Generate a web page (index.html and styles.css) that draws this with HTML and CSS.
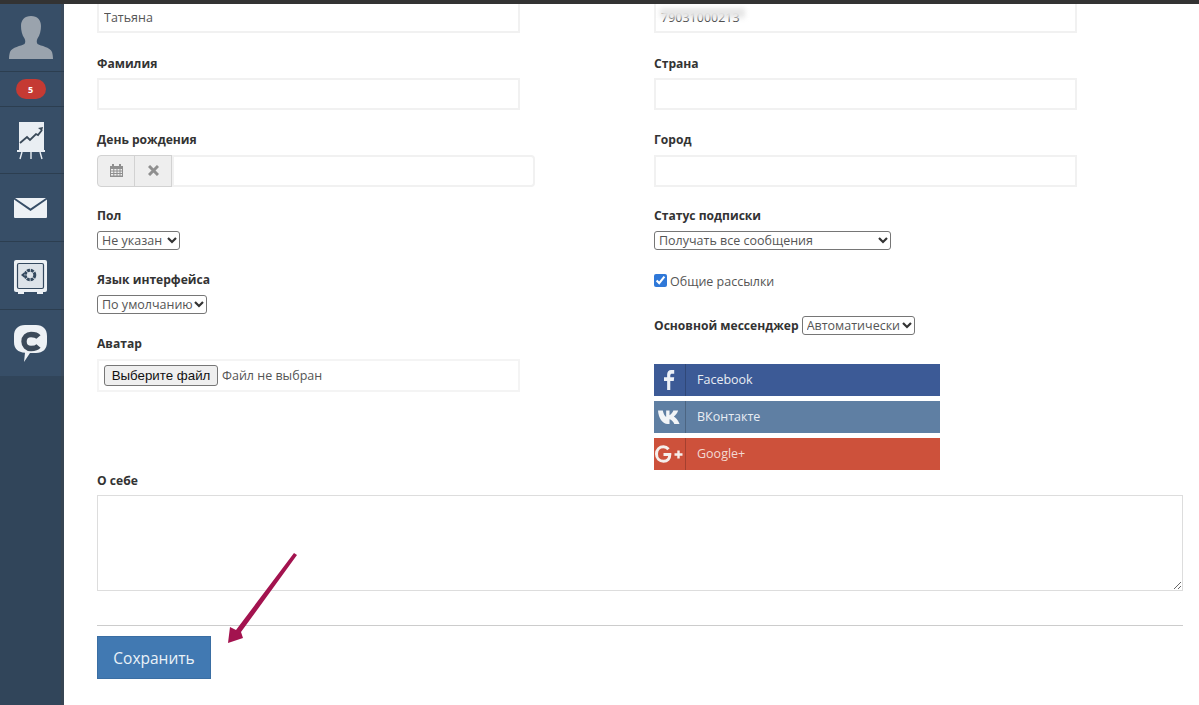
FILE: index.html
```html
<!DOCTYPE html>
<html lang="ru">
<head>
<meta charset="utf-8">
<title>Профиль</title>
<link rel="stylesheet" href="styles.css">
</head>
<body>
<div class="topbar"></div>
<div class="layout">
  <nav class="sidebar">
    <a class="nav-item nav-avatar">
      <svg width="44" height="43" viewBox="0 0 44 43"><path fill="#9aa3ad" d="M22 0c-6.500 0-10 4-10 10 0 4 1 9 3.500 12.500 1 2 1 4 0 5.500C12 30 3 31 1 36c-.7 2-1 5-1 7h44c0-2-.3-5-1-7-2-5-11-6-14.500-8-1-1.500-1-3.500 0-5.500C31 19 32 14 32 10c0-6-3.500-10-10-10z"/></svg>
    </a>
    <a class="nav-item nav-badge"><span class="badge">5</span></a>
    <a class="nav-item nav-chart">
      <svg width="28" height="38" viewBox="0 0 28 38"><rect x="2" y="0" width="25" height="28" fill="#e9eef3"/><path fill="none" stroke="#3a4a59" stroke-width="1.8" d="M3 21l7-6 3 3 6-6 2 1 4-5"/><path fill="#3a4a59" d="M26 5l-5 1 4 3z"/><rect x="0" y="28" width="28" height="2" fill="#e9eef3"/><path stroke="#e9eef3" stroke-width="1.4" d="M5 30l-2 7M14 30v7M23 30l2 7"/></svg>
    </a>
    <a class="nav-item nav-mail">
      <svg width="33" height="20" viewBox="0 0 33 20"><path fill="#edf1f5" d="M1 0h31L16.500 10.500zM0 1.500l16.500 11.500L33 1.500V19a1 1 0 0 1-1 1H1a1 1 0 0 1-1-1z"/></svg>
    </a>
    <a class="nav-item nav-safe">
      <svg width="33" height="34" viewBox="0 0 33 34"><rect width="33" height="32" rx="2" fill="#edf1f5"/><rect x="3.500" y="3.500" width="26" height="25" rx="1.500" fill="#dde3e9" stroke="#34495f" stroke-width="1.200"/><circle cx="16" cy="15" r="4.800" fill="none" stroke="#34495f" stroke-width="3" stroke-dasharray="3 .8"/><path fill="#34495f" d="M7 15l3-2.500v5z"/><rect x="4" y="32" width="6" height="2" fill="#edf1f5"/><rect x="23" y="32" width="6" height="2" fill="#edf1f5"/></svg>
    </a>
    <a class="nav-item nav-chat">
      <svg width="33" height="37" viewBox="0 0 33 37"><path fill="#edf1f5" d="M11 0h11c7 0 11 4 11 11v6c0 7-4 11-11 11h-6l-6 9 1-9.200C4 27 0 24 0 17v-6C0 4 4 0 11 0z"/><path fill="none" stroke="#3c4a5a" stroke-width="5.400" d="M24.500 12C23 10.200 20.500 9.500 17 9.500c-4 0-7 3-7 7s3 7 7 7c3.500 0 6-.7 7.500-2.500"/></svg>
    </a>
  </nav>
  <main class="content">
    <form class="profile-form">
      <div class="columns">
        <div class="col">
          <div class="field field-first">
            <input class="text-input" type="text" value="Татьяна">
          </div>
          <div class="field">
            <label class="label">Фамилия</label>
            <input class="text-input" type="text">
          </div>
          <div class="field field-mid">
            <label class="label">День рождения</label>
            <div class="date-group">
              <span class="addon">
                <svg width="13" height="13" viewBox="0 0 13 13"><path fill="#8f8f8f" d="M0 2h2V0h2v2h5V0h2v2h2v11H0zM1 5v1.500h2.300V5zm3.300 0v1.500h2.200V5zm3.200 0v1.500h2V5zm3 0v1.500H12V5zM1 7.500V9h2.300V7.500zm3.300 0V9h2.200V7.500zm3.200 0V9h2V7.500zm3 0V9H12V7.500zM1 10v1.500h2.300V10zm3.300 0v1.500h2.200V10zm3.200 0v1.500h2V10zm3 0v1.500H12V10z"/></svg>
              </span>
              <span class="addon">
                <svg width="11" height="11" viewBox="0 0 11 11"><path stroke="#8f8f8f" stroke-width="3" d="M1 1l9 9M10 1l-9 9"/></svg>
              </span>
              <input class="date-input" type="text">
            </div>
          </div>
          <div class="field field-select">
            <label class="label">Пол</label>
            <select class="native-select select-gender"><option>Не указан</option></select>
          </div>
          <div class="field field-select">
            <label class="label">Язык интерфейса</label>
            <select class="native-select select-lang"><option>По умолчанию</option></select>
          </div>
          <div class="field field-avatar">
            <label class="label">Аватар</label>
            <div class="file-box"><button class="file-button" type="button">Выберите файл</button><span class="file-name">Файл не выбран</span></div>
          </div>
        </div>
        <div class="col">
          <div class="field field-first">
            <div class="text-input phone"><span class="phone-value">79031000213</span><span class="phone-blur"></span></div>
          </div>
          <div class="field">
            <label class="label">Страна</label>
            <input class="text-input" type="text">
          </div>
          <div class="field field-mid">
            <label class="label">Город</label>
            <input class="text-input" type="text">
          </div>
          <div class="field field-select">
            <label class="label">Статус подписки</label>
            <select class="native-select select-wide"><option>Получать все сообщения</option></select>
          </div>
          <label class="check-row"><input class="check" type="checkbox" checked>Общие рассылки</label>
          <div class="messenger-row">
            <span class="label label-inline">Основной мессенджер</span>
            <select class="native-select select-msg"><option>Автоматически</option></select>
          </div>
          <div class="socials">
            <a class="social social-fb"><span class="social-icon"><svg width="11" height="20" viewBox="0 0 14 22" preserveAspectRatio="none"><path fill="#edf1f7" d="M4 22V12H0V8h4V5c0-3 2-5 5-5h4v4h-3C9 4 8 4.500 8 6v2h5l-.6 4H8v10z"/></svg></span><span class="social-label">Facebook</span></a>
            <a class="social social-vk"><span class="social-icon"><svg width="24" height="14" viewBox="0 0 25 15" preserveAspectRatio="none"><path fill="#f1f4f7" d="M0 .5h5c.5 3 2 6 3.500 7V.5H12v5c2-1 3.500-3.500 4-5h5c-.5 2.500-3 5.500-4.500 6.500 1.500 1 4.500 3.500 6 8h-5.500c-1-2.500-3-4.500-5-5v5h-2C5 15 .5 9 0 .5z"/></svg></span><span class="social-label">ВКонтакте</span></a>
            <a class="social social-gp"><span class="social-icon"><svg width="29" height="18" viewBox="0 0 29 18"><path fill="none" stroke="#f5efec" stroke-width="3" d="M13.500 4.300C12 2.500 10.500 1.700 8.500 1.700c-4 0-7 3-7 7.300s3 7.300 7 7.300c4 0 6.300-2.700 6.300-6.800H8.500"/><path stroke="#f5efec" stroke-width="2.400" d="M19.500 9.500h8M23.500 5.500v8"/></svg></span><span class="social-label">Google+</span></a>
          </div>
        </div>
      </div>
      <div class="field about">
        <label class="label">О себе</label>
        <textarea class="textarea"></textarea>
      </div>
      <div class="actions">
        <button class="save" type="button">Сохранить</button>
      </div>
    </form>
    <svg class="arrow" width="80" height="94" viewBox="0 0 80 94"><path fill="#a3134f" d="M70 1l3 2-56 77 2 6-15 5 2-16 6 3z"/></svg>
  </main>
</div>
</body>
</html>
```
FILE: styles.css
```css
* { box-sizing: border-box; }
html, body { margin: 0; height: 705px; overflow: hidden; background: #fff; }
body { font-family: "Open Sans", "Noto Sans", sans-serif; color: #333; font-size: 12px; }
.topbar { height: 4px; background: #333; }
.layout { display: flex; height: 701px; }
.sidebar { width: 64px; flex: none; background: #31455a; box-shadow: inset -3px 0 0 rgba(70,70,70,.3); }
.nav-item { display: flex; align-items: center; justify-content: center; padding-right: 3px; border-bottom: 1px solid #2c3e50; background: #374e67; box-shadow: inset -3px 0 0 rgba(70,70,70,.3); }
.nav-avatar { height: 68px; }
.nav-badge { height: 35px; }
.nav-chart { height: 67px; padding-top: 2px; }
.nav-mail { height: 68px; padding-top: 1px; }
.nav-safe { height: 68px; padding-top: 2px; }
.nav-chat { height: 66px; border-bottom: 0; padding-top: 1px; }
.badge { width: 30px; height: 20px; border-radius: 10px; background: #c53a33; color: #fff; font-size: 9px; font-weight: 700; display: flex; align-items: center; justify-content: center; }
.content { position: relative; flex: 1; padding-left: 33px; padding-right: 16px; overflow: hidden; }
.profile-form { margin-top: -3px; }
.columns { display: grid; grid-template-columns: 423px 423px; column-gap: 134px; }
.col { display: flex; flex-direction: column; }
.field { display: flex; flex-direction: column; align-items: flex-start; height: 76.500px; }
.field-first { height: 54px; }
.field-mid { height: 75.500px; }
.field-select { height: 64px; }
.field-avatar { height: auto; }
.label { display: block; font-weight: 700; font-size: 12.100px; line-height: 18px; height: 23px; color: #333; }
.field-mid .label { line-height: 16px; }
.field-select .label, .field-avatar .label { height: 24px; }
.text-input { width: 423px; height: 32px; border: 2px solid #f1f1f1; background: #fff; padding: 0 5px; font: 12.500px "Open Sans", sans-serif; color: #555; outline: 0; }
.phone { position: relative; display: flex; align-items: center; }
.phone-value { color: #444; }
.phone-blur { position: absolute; left: 4px; top: 5px; width: 85px; height: 10px; background: #e6e6e6; filter: blur(2.500px); }
.date-group { display: flex; width: 438px; height: 32px; }
.addon { width: 38px; flex: none; display: flex; align-items: center; justify-content: center; background: #eee; border: 1px solid #d2d2d2; margin-right: -1px; }
.addon:first-child { border-radius: 4px 0 0 4px; }
.date-input { flex: 1; min-width: 0; border: 2px solid #f1f1f1; border-radius: 0 4px 4px 0; outline: 0; margin-left: 1px; }
.native-select { appearance: none; height: 19px; font: 12.500px "Open Sans", sans-serif; line-height: 17px; color: #555; border: 1px solid #767676; border-radius: 3px; padding: 0 0 0 4px; background: #fff url("data:image/svg+xml,%3Csvg xmlns='http://www.w3.org/2000/svg' width='10' height='7'%3E%3Cpath fill='none' stroke='%23333' stroke-width='2.200' d='M1 1l4 4 4-4'/%3E%3C/svg%3E") no-repeat right 2px center; }
.select-gender { width: 83px; }
.select-lang { width: 110px; }
.select-msg { width: 113px; }
.select-wide { width: 237px; }
.file-box { width: 423px; height: 33px; border: 2px solid #f4f4f4; padding: 4px 5px; display: flex; align-items: center; }
.file-button { height: 21px; width: 114px; padding: 0; font: 13.300px "Liberation Sans", sans-serif; color: #111; background: #efefef; border: 1px solid #767676; border-radius: 3px; }
.file-name { margin-left: 4px; font-size: 12.500px; color: #555; }
.check-row { display: flex; align-items: center; height: 17px; margin-top: 2px; margin-bottom: 26px; font-size: 12.500px; color: #555; }
.check { width: 13px; height: 13px; margin: 0 3px 3px 0; accent-color: #2f78d8; }
.messenger-row { display: flex; align-items: center; gap: 3px; height: 19px; margin-bottom: 29px; }
.label-inline { height: auto; }
.socials { display: flex; flex-direction: column; gap: 5px; width: 286px; }
.social { display: flex; align-items: center; height: 32px; color: #e8edf3; font-size: 12.500px; }
.social-icon { width: 32px; height: 32px; flex: none; margin-right: 11px; display: flex; align-items: center; justify-content: center; border-right: 1px solid rgba(0,0,0,.2); }
.social-label { margin-bottom: 2px; }
.social-fb { background: #3c5a96; }
.social-vk { background: #5f7fa3; }
.social-gp { background: #cd513b; color: #f3d9d2; }
.about { position: absolute; left: 33px; top: 468px; width: 1086px; height: auto; }
.textarea { width: 1086px; height: 96px; border: 1px solid #ddd; outline: 0; display: block; }
.actions { position: absolute; left: 33px; top: 621px; width: 1086px; border-top: 1px solid #ccc; padding-top: 10px; }
.save { width: 114px; height: 43px; background: #4179b2; color: #eaf2f8; border: 1px solid #3a6ea3; font: 15.500px "Open Sans", sans-serif; padding: 0; }
.arrow { position: absolute; left: 160px; top: 548px; }
```
